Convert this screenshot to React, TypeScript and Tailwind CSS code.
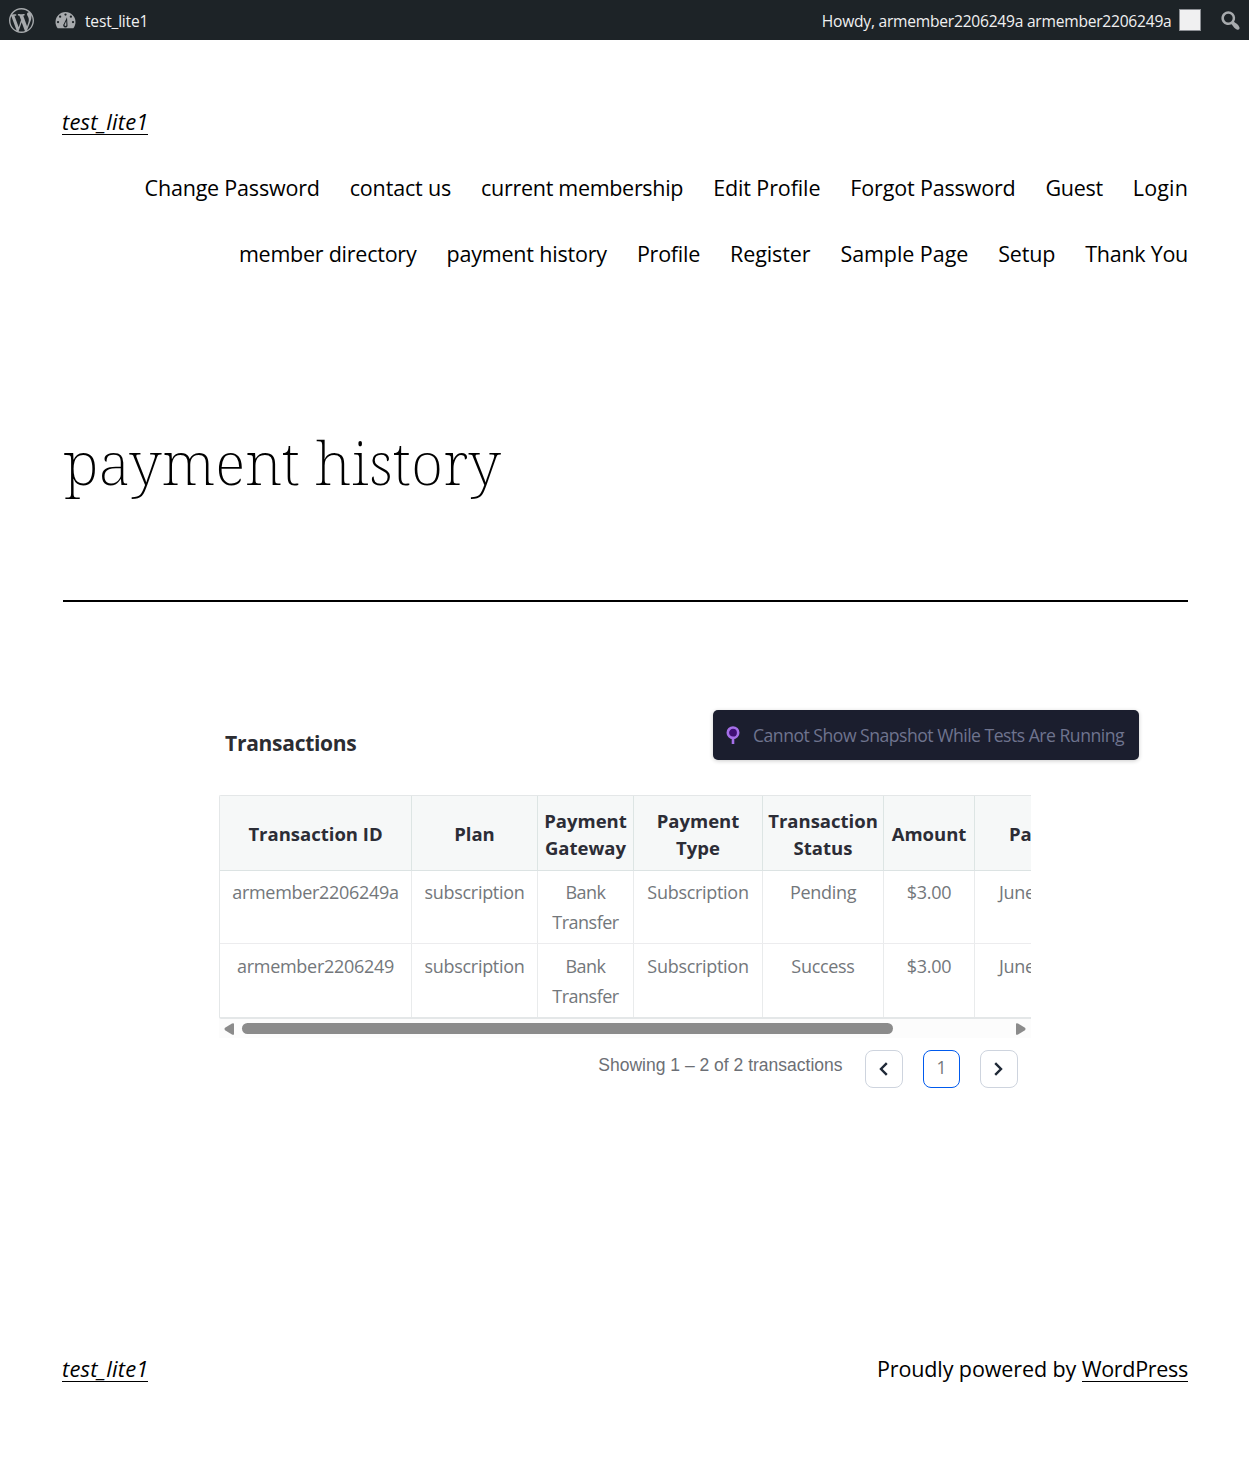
import React from "react";

type NavItem = { label: string; tracking: string };

const navTop: NavItem[] = [
  { label: "Change Password", tracking: "tracking-[-0.2px]" },
  { label: "contact us", tracking: "tracking-[-0.16px]" },
  { label: "current membership", tracking: "tracking-[-0.3px]" },
  { label: "Edit Profile", tracking: "tracking-[-0.12px]" },
  { label: "Forgot Password", tracking: "tracking-[-0.16px]" },
  { label: "Guest", tracking: "tracking-[-0.3px]" },
  { label: "Login", tracking: "tracking-[0.14px]" },
];

const navBottom: NavItem[] = [
  { label: "member directory", tracking: "tracking-[-0.24px]" },
  { label: "payment history", tracking: "tracking-[-0.19px]" },
  { label: "Profile", tracking: "tracking-[-0.25px]" },
  { label: "Register", tracking: "tracking-[-0.1px]" },
  { label: "Sample Page", tracking: "tracking-[-0.06px]" },
  { label: "Setup", tracking: "tracking-[-0.18px]" },
  { label: "Thank You", tracking: "tracking-[-0.27px]" },
];

const headers: React.ReactNode[] = [
  "Transaction ID",
  "Plan",
  <>Payment<br />Gateway</>,
  <>Payment<br />Type</>,
  <>Transaction<br />Status</>,
  "Amount",
  "Payment Date",
];

const rows = [
  ["armember2206249a", "subscription", "Bank Transfer", "Subscription", "Pending", "$3.00", "June 22, 2024"],
  ["armember2206249", "subscription", "Bank Transfer", "Subscription", "Success", "$3.00", "June 22, 2024"],
];

const columns = "grid grid-cols-[192px_126px_96px_129px_121px_91px_200px]";

function WordPressIcon() {
  return (
    <svg className="size-[25px] shrink-0" viewBox="0 0 20 20" fill="currentColor">
      <path d="M20 10c0-5.51-4.49-10-10-10C4.48 0 0 4.49 0 10c0 5.52 4.48 10 10 10 5.51 0 10-4.48 10-10zM7.78 15.37L4.37 6.22c.55-.02 1.17-.08 1.17-.08.5-.06.44-1.13-.06-1.11 0 0-1.45.11-2.37.11-.18 0-.37 0-.58-.01C4.12 2.69 6.87 1.11 10 1.11c2.33 0 4.45.87 6.05 2.34-.68-.11-1.65.39-1.65 1.58 0 .74.45 1.36.9 2.1.35.61.55 1.36.55 2.46 0 1.49-1.4 5-1.4 5l-3.03-8.37c.54-.02.82-.17.82-.17.5-.05.44-1.25-.06-1.22 0 0-1.44.12-2.38.12-.87 0-2.33-.12-2.33-.12-.5-.03-.56 1.2-.06 1.22l.92.08 1.26 3.41zM17.41 10c.24-.64.74-1.87.43-4.25.7 1.29 1.05 2.71 1.05 4.25 0 3.29-1.73 6.24-4.4 7.78.97-2.59 1.94-5.2 2.92-7.78zM6.1 18.09C3.12 16.65 1.11 13.53 1.11 10c0-1.3.23-2.48.72-3.59C3.25 10.3 4.67 14.2 6.1 18.09zm4.03-6.63l2.58 6.98c-.86.29-1.76.45-2.71.45-.79 0-1.57-.11-2.29-.33.81-2.38 1.62-4.74 2.42-7.1z" />
    </svg>
  );
}

function DashboardIcon() {
  return (
    <svg className="mb-[2px] ml-[18.5px] size-[25px] shrink-0" viewBox="0 0 20 20">
      <path fill="#a7aaad" d="M3.76 17h12.48c1.1-1.37 1.76-3.11 1.76-5 0-4.42-3.58-8-8-8s-8 3.58-8 8c0 1.89.66 3.63 1.76 5z" />
      <g fill="#1d2327">
        <circle cx="10" cy="6" r="0.9" />
        <circle cx="5.7" cy="7.7" r="0.9" />
        <circle cx="14.3" cy="7.7" r="0.9" />
        <circle cx="4" cy="12" r="0.9" />
        <circle cx="16" cy="12" r="0.9" />
        <path d="M11.2 8.2l.4 6.1a1.75 1.75 0 1 1-2.9-.9z" />
      </g>
      <path d="M10.6 11.2l.1 3.1a.75.75 0 1 1-1.3-.5z" fill="#a7aaad" />
    </svg>
  );
}

function SearchIcon() {
  return (
    <svg className="ml-[16.5px] size-[25px] shrink-0" viewBox="0 0 20 20" fill="currentColor">
      <path d="M12.14 4.18c1.87 1.87 2.11 4.75.72 6.89.12.1.22.21.36.31.2.16.47.36.81.59.34.24.56.39.66.47.42.31.73.57.94.78.32.32.6.65.84 1 .25.35.44.69.59 1.04.14.35.21.68.18 1-.02.32-.14.59-.36.81s-.49.34-.81.36c-.31.02-.65-.04-.99-.19-.35-.14-.7-.34-1.04-.59-.35-.24-.68-.52-1-.84-.21-.21-.47-.52-.77-.93-.1-.13-.25-.35-.47-.66-.22-.32-.4-.57-.56-.78-.16-.2-.29-.35-.44-.5-2.07 1.09-4.69.76-6.44-.98-2.14-2.15-2.14-5.64 0-7.78 2.15-2.15 5.63-2.15 7.78 0zm-1.41 6.36c1.36-1.37 1.36-3.58 0-4.95-1.37-1.37-3.59-1.37-4.95 0-1.37 1.37-1.37 3.58 0 4.95 1.36 1.37 3.58 1.37 4.95 0z" />
    </svg>
  );
}

function AdminBar() {
  return (
    <div className="flex h-10 items-center bg-[#1d2327] pr-[6.5px] pl-[9px] text-[15.6px] text-[#f0f0f1]">
      <div className="flex items-center text-[#a7aaad]">
        <WordPressIcon />
        <DashboardIcon />
      </div>
      <span className="mt-[3px] ml-[7.5px] tracking-[-0.2px]">test_lite1</span>
      <span className="mt-[3px] ml-auto whitespace-nowrap tracking-[-0.24px]">Howdy, armember2206249a armember2206249a</span>
      <div className="ml-[7.5px] size-[22px] border border-[#8c8f94] bg-[#f0f0f1]" />
      <span className="flex text-[#a7aaad]"><SearchIcon /></span>
    </div>
  );
}

function NavRow({ items }: { items: NavItem[] }) {
  return (
    <div className="flex h-[66px] items-center justify-end gap-[30px]">
      {items.map((item) => (
        <a key={item.label} className={`whitespace-nowrap ${item.tracking}`}>{item.label}</a>
      ))}
    </div>
  );
}

function SiteTitle() {
  return (
    <a className="block w-[86px] border-b border-black text-[22px] leading-[25px] italic tracking-[0.15px] whitespace-nowrap">test_lite1</a>
  );
}

function PageButton({ active, children }: { active?: boolean; children: React.ReactNode }) {
  return (
    <button className={`flex h-[38px] items-center justify-center rounded-[8px] border bg-white ${active ? "w-[37px] border-[#005aee] pb-[3px] text-[17.5px] text-[#73777b]" : "w-[38px] border-[#ced4de] pr-[2px] text-[#1f2937]"}`}>
      {children}
    </button>
  );
}

function TransactionsTable() {
  return (
    <div className="w-[812px] overflow-hidden">
      <div className="w-[956px] rounded-[2px] border-t border-b-2 border-l border-[#e4e7e8] text-center">
        <div className={`${columns} h-[75px] border-b border-[#dce3e3] bg-[#f6f8f8] text-[18.5px] leading-[27px] font-bold text-[#2c2d36]`}>
          {headers.map((header, i) => (
            <div key={i} className="flex items-center justify-center border-r border-[#dde5e4] whitespace-nowrap">
              <span className={typeof header === "string" ? "" : "pt-[2px]"}>{header}</span>
            </div>
          ))}
        </div>
        {rows.map((row, r) => (
          <div key={row[0]} className={`${columns} h-[73px] text-[18px] leading-[30px] tracking-[-0.3px] text-[#73777b] ${r === 0 ? "border-b border-[#ececee]" : ""}`}>
            {row.map((cell, i) => (
              <div
                key={i}
                className={`border-r border-[#e9ebec] ${r === 0 ? "pt-[6px]" : "pt-[7px]"} ${i === 2 ? "px-3 tracking-[-0.5px]" : i === 6 ? "pl-6 text-left" : ""}`}
              >
                {cell}
              </div>
            ))}
          </div>
        ))}
      </div>
      <div className="flex h-[19px] items-center bg-[#fcfcfc] px-[5px]">
        <svg width="10" height="12" viewBox="0 0 10 12" fill="#8b8b8b"><path d="M8 0.4Q10 -0.3 10 1V11Q10 12.3 8 11.6L1 7.2Q0 6 1 4.8Z" /></svg>
        <div className="ml-2 h-[11px] w-[651px] rounded-full bg-[#8b8b8b]" />
        <svg className="ml-auto" width="10" height="12" viewBox="0 0 10 12" fill="#8b8b8b"><path d="M2 0.4Q0 -0.3 0 1V11Q0 12.3 2 11.6L9 7.2Q10 6 9 4.8Z" /></svg>
      </div>
    </div>
  );
}

function SnapshotNotice() {
  return (
    <div className="flex h-[50px] w-[426px] shrink-0 items-center rounded-[5px] bg-[#1b1e2e] shadow-[0_1px_4px_rgba(0,0,0,0.2)]">
      <svg className="ml-[13px] shrink-0" width="14" height="19" viewBox="0 0 14 19" fill="none">
        <circle cx="7" cy="6.7" r="5.2" fill="#3f0f74" stroke="#a56fe8" strokeWidth="2.6" />
        <path d="M7 12v6" stroke="#a56fe8" strokeWidth="2.6" />
      </svg>
      <span className="ml-[13px] text-[17.6px] tracking-[-0.5px] whitespace-nowrap text-[#6f748e]">Cannot Show Snapshot While Tests Are Running</span>
    </div>
  );
}

export default function App() {
  return (
    <div className="h-[1465px] overflow-hidden bg-white font-['Open_Sans','Noto_Sans',sans-serif] text-black">
      <AdminBar />
      <header className="px-[62px] pt-[69px]">
        <SiteTitle />
        <nav className="mt-5 -mr-px text-[21.5px]">
          <NavRow items={navTop} />
          <NavRow items={navBottom} />
        </nav>
      </header>
      <main>
        <div className="mt-[135px] mr-[61px] ml-[63px] h-[180px] border-b-2 border-black">
          <h1 className="pl-px font-['Noto_Serif','Liberation_Serif',serif] text-[59.5px] leading-[80px] font-[200] whitespace-nowrap">payment history</h1>
        </div>
        <section className="mt-[108px] ml-[219px]">
          <div className="flex h-[85px] items-start">
            <h2 className="w-[494px] pt-[17px] pl-[6px] text-[21px] leading-[32px] font-bold tracking-[-0.28px] text-[#2c2d32]">Transactions</h2>
            <SnapshotNotice />
          </div>
          <TransactionsTable />
          <div className="mt-[12px] flex w-[799px] items-start justify-end">
            <span className="mr-[22.5px] pt-[2px] font-['Liberation_Sans',Arial,sans-serif] text-[17.5px] leading-[26px] whitespace-nowrap text-[#6c6f75]">Showing 1 – 2 of 2 transactions</span>
            <div className="flex gap-5">
              <PageButton>
                <svg width="9" height="14" viewBox="0 0 9 14" fill="none" stroke="currentColor" strokeWidth="2.4"><path d="M7.8 1.2L2 7l5.8 5.8" /></svg>
              </PageButton>
              <PageButton active>1</PageButton>
              <PageButton>
                <svg width="9" height="14" viewBox="0 0 9 14" fill="none" stroke="currentColor" strokeWidth="2.4"><path d="M1.2 1.2L7 7l-5.8 5.8" /></svg>
              </PageButton>
            </div>
          </div>
        </section>
      </main>
      <footer className="mt-[268px] mr-[61px] ml-[62px] flex items-start justify-between text-[21.5px] leading-[25px]">
        <SiteTitle />
        <p className="tracking-[-0.1px] whitespace-nowrap">
          Proudly powered by <a className="inline-block border-b border-black tracking-[-0.3px]">WordPress</a>
        </p>
      </footer>
    </div>
  );
}
